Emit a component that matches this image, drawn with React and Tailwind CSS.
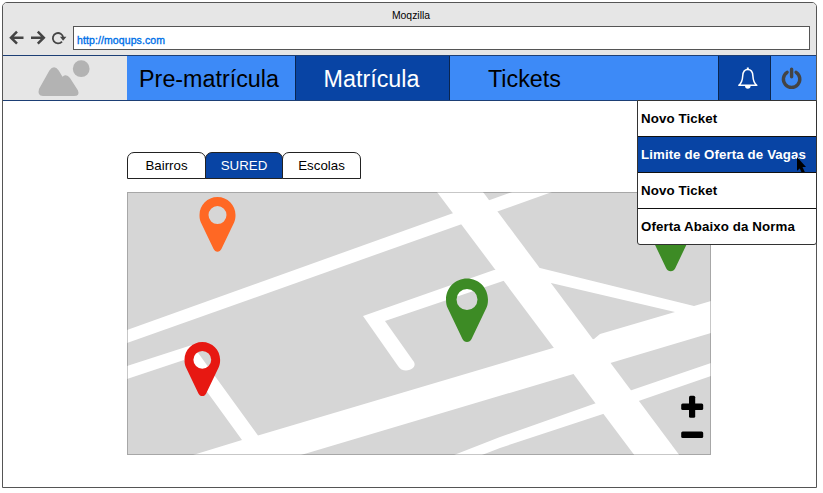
const roads = [
  '127,330 512,192 552,192 127,343',
  '437,192 483,192 680,456 635,456',
  '540,268 694,306 711,301 711,333 301,455 193,455 242,440 184,360 127,379 127,366 192,345 196,350 258,435.5 553,348 594,339 600,334 675,312 551,283 536,285 530,268',
  '454,455 500,437 595,403.5 632,390 711,363 711,376 640,400.5 603,414 500,448 482,455',
];

const pins = [
  { x: 217.5, y: 197.1, s: 1, color: '#ff6824' },
  { x: 202.3, y: 342, s: 0.99, color: '#e71812' },
  { x: 467, y: 278.5, s: 1.165, color: '#3d8b25' },
  { x: 670.7, y: 207.6, s: 1.165, color: '#3d8b25' },
];

function Pin({ x, y, s, color }) {
  return (
    <path
      transform={`translate(${x} ${y}) scale(${s})`}
      fill={color}
      fillRule="evenodd"
      d="M0 0C10 0 18 8 18 18C18 21 17.6 23.3 16.6 25.4L3.9 52C3.1 53.7 1.7 54.6 0 54.6S-3.1 53.7-3.9 52L-16.6 25.4C-17.6 23.3-18 21-18 18C-18 8-10 0 0 0ZM0 9A9 9 0 1 0 0 27A9 9 0 1 0 0 9Z"
    />
  );
}

function CityMap() {
  return (
    <svg className="block h-[263px] w-[584px]" viewBox="127 192 584 263">
      <rect x="127" y="192" width="584" height="263" fill="#d6d6d6" />
      <g fill="#fff">
        {roads.map((points) => (
          <polygon key={points} points={points} />
        ))}
        <path d="M363 316L494 270H506V280L385 321L414 362C418 369 403 375 398 366Z" />
      </g>
      <rect x="127.5" y="192.5" width="583" height="262" fill="none" stroke="#000" strokeOpacity=".22" />
      {pins.map((p) => (
        <Pin key={`${p.x}-${p.y}`} {...p} />
      ))}
      <rect x="681.2" y="403.5" width="22" height="6.5" rx="1.5" />
      <rect x="689" y="395.7" width="6.2" height="22" rx="1.5" />
      <rect x="681.2" y="431.5" width="22" height="6.5" rx="1.5" />
    </svg>
  );
}

function BrowserBar() {
  return (
    <header className="flex h-[52px] flex-col rounded-t-[4px] bg-[#e6e6e6]">
      <div className="h-[23px] pt-[5px] pl-[3px] text-center text-[10.4px] leading-[15px]">Moqzilla</div>
      <div className="flex h-[24px] items-center pr-[6px]">
        <svg className="h-[24px] w-[70px] shrink-0" viewBox="3 26 70 24" fill="none" stroke="#444" strokeWidth="2.5">
          <path d="M23.5 37.7H11.5M17 31.7L11 37.7L17 43.7" />
          <path d="M31 37.7H43M37.8 31.7L43.8 37.7L37.8 43.7" />
          <path d="M62 41.6A5.2 5.2 0 1 1 63.2 37.6" strokeWidth="1.8" />
          <path d="M60 36.8H66.4L63.1 40.8Z" fill="#444" stroke="none" />
        </svg>
        <div className="h-[24px] flex-1 border border-[#555] bg-white pt-[6px] pl-[3px] text-[10.5px] leading-[15px] tracking-[0.1px] text-[#0070e8] [-webkit-text-stroke:0.35px_#0070e8]">
          http://moqups.com
        </div>
      </div>
    </header>
  );
}

function NavBar() {
  return (
    <nav className="flex h-[46px] border-y border-[#1d3f75] bg-[#3d8af7] text-[23.3px] leading-[46px]">
      <div className="w-[124px] bg-[#e6e6e6]">
        <svg className="block h-[44px] w-[124px]" viewBox="3 56 124 44" fill="#b3b3b3">
          <circle cx="81.2" cy="68.7" r="8.4" />
          <path d="M39 89L49.4 70.5Q54 64 58.7 70.5L62.5 76.7Q66.5 73.5 70 78L78 90.5Q80 96 74 96H43Q37 96 39 89Z" />
        </svg>
      </div>
      <div className="w-[168px] pr-[4px] text-center">Pre-matrícula</div>
      <div className="w-[155px] border-x border-[#0a2550] bg-[#0844a4] pr-[2px] text-center text-white">Matrícula</div>
      <div className="w-[268px] pl-[38px]">Tickets</div>
      <div className="w-[53px] border-x border-[#0a2550] bg-[#0844a4]">
        <svg className="block h-[44px] w-[51px]" viewBox="719 56 51 44" fill="none" stroke="#fff" strokeWidth="1.5" strokeLinejoin="round">
          <path d="M738.8 85.3C742 83 742.5 80 742.7 76C742.9 71.5 744.6 69.5 747.8 69.5S752.7 71.5 752.9 76C753.1 80 753.6 83 756.8 85.3Z" />
          <path d="M747.8 67.5V69.5" strokeWidth="2" />
          <path d="M745 86H750.6Q750.4 88.7 747.8 88.7T745 86Z" fill="#fff" stroke="none" />
        </svg>
      </div>
      <div className="w-[45px]">
        <svg className="block h-[44px] w-[45px]" viewBox="771 56 45 44" fill="none" stroke="#444" strokeWidth="3.4" strokeLinecap="round">
          <path d="M787.1 72.3A8.2 8.2 0 1 0 796.1 72.3M791.6 69.3V76.8" />
        </svg>
      </div>
    </nav>
  );
}

function Tabs() {
  const base = 'h-[27px] border border-[#222] rounded-t-[7px] text-center leading-[26px]';
  return (
    <div className="flex text-[13.3px]">
      <div className={`${base} w-[79px] bg-white`}>Bairros</div>
      <div className={`${base} -ml-px w-[78px] bg-[#0844a4] text-white`}>SURED</div>
      <div className={`${base} -ml-px w-[79px] bg-white`}>Escolas</div>
    </div>
  );
}

function TicketMenu() {
  return (
    <ul className="absolute top-[100px] left-[637px] w-[180px] overflow-hidden rounded-b-[3px] border border-[#333] bg-white text-[13.3px] leading-[35px] font-bold tracking-[0.1px]">
      <li className="h-[36px] border-b border-[#111] pl-[3px]">Novo Ticket</li>
      <li className="h-[36px] border-b border-[#111] bg-[#0844a4] pl-[3px] whitespace-nowrap text-white">Limite de Oferta de Vagas</li>
      <li className="h-[36px] border-b border-[#111] pl-[3px]">Novo Ticket</li>
      <li className="h-[35px] pl-[3px]">Oferta Abaixo da Norma</li>
    </ul>
  );
}

export default function App() {
  return (
    <div className="relative h-[493px] w-[823px] bg-white pt-[2px] pl-[2px] font-['Liberation_Sans',Arial,sans-serif] text-black">
      <main className="h-[486px] w-[815px] rounded-t-[5px] border border-[#555]">
        <BrowserBar />
        <NavBar />
        <section className="flex flex-col gap-[13px] pt-[51px] pl-[124px]">
          <Tabs />
          <CityMap />
        </section>
      </main>
      <TicketMenu />
      <svg className="absolute top-[157px] left-[796px] h-[16px] w-[12px]" viewBox="0 0 12 16">
        <path d="M1 0L10 10H6.5L8.8 15H5.4L3.8 11.4L1 13.8Z" />
      </svg>
    </div>
  );
}
